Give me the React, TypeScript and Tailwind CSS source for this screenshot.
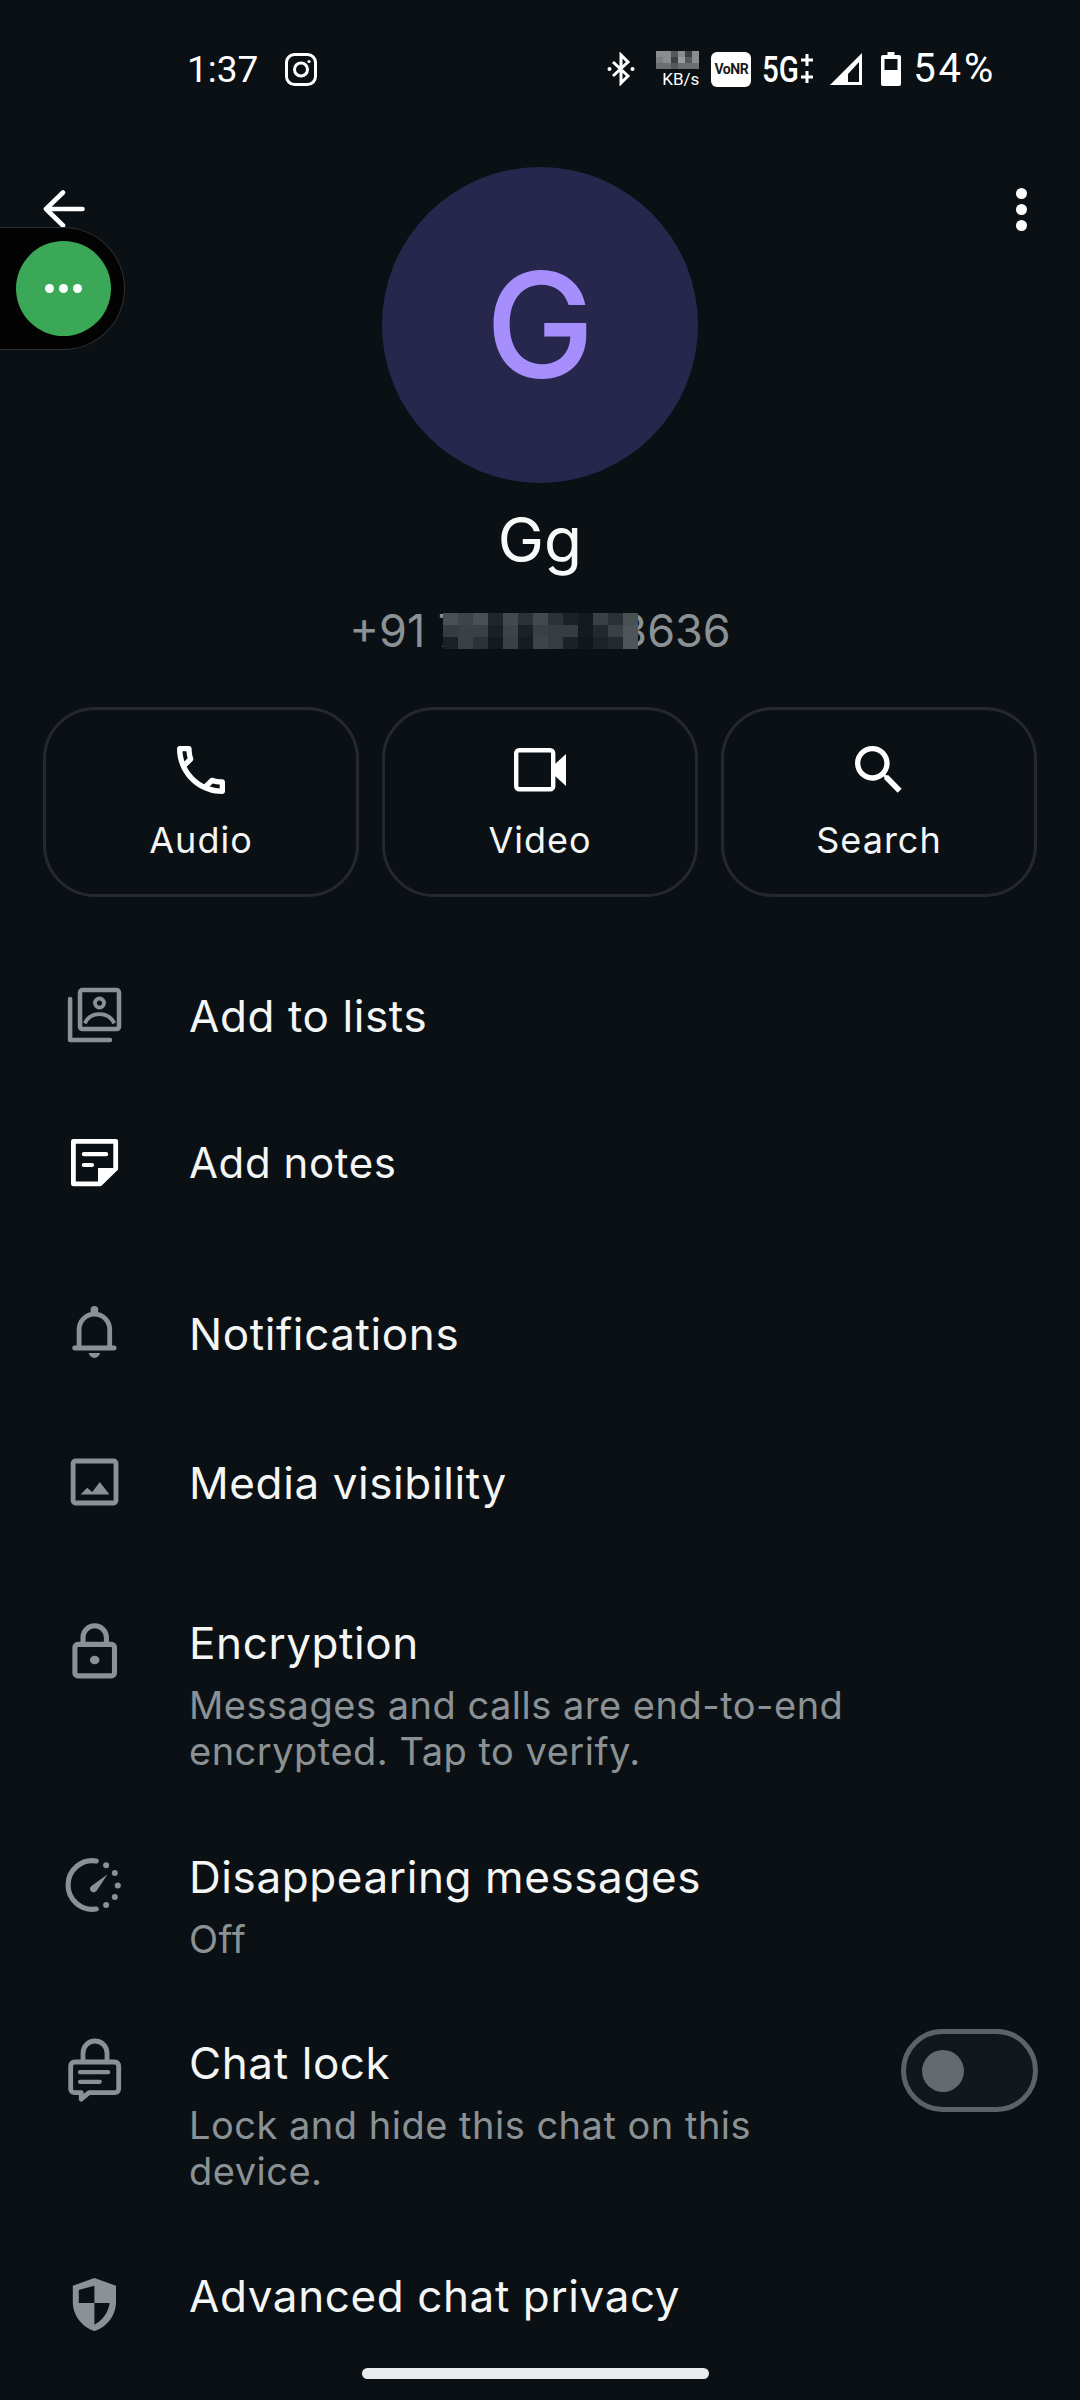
import React from 'react';

const FONT = "font-['Inter',sans-serif]";
const GREY = '#8b9295';

// mosaic cells hiding the middle of the phone number
const MOSAIC = [
  ['#4a5154', '#3e4548', '#4a5154', '#1f272b', '#434a4d', '#2b3337', '#434a4d', '#2b3337', '#1a2226', '#141b1f', '#3a4144', '#2b3135', '#4a5154'],
  ['#363d40', '#3a4144', '#3a4144', '#192125', '#3e4548', '#1a2226', '#3a4144', '#363d40', '#363d40', '#141b1f', '#232a2e', '#3a4144', '#4f5659'],
  ['#1a2226', '#3a4144', '#2c3336', '#141b1f', '#3a4144', '#161d21', '#3e4548', '#363d40', '#1a2226', '#11181c', '#1d2428', '#232a2e', '#4f5659'],
];
const SPEED = [
  ['#8a8d8f', '#8a8d8f', '#55595b', '#8a8d8f', '#3a3f42', '#8a8d8f'],
  ['#7c7f81', '#8a8d8f', '#3c4043', '#9a9c9e', '#55595b', '#8a8d8f'],
  ['#6b6e70', '#6b6e70', '#55595b', '#6b6e70', '#6b6e70', '#6b6e70'],
];

const Icon = ({children}: {children: React.ReactNode}) => (
  <svg viewBox="0 0 24 24" className="w-[72px] h-[72px] shrink-0" fill="none">{children}</svg>
);

const ListsIcon = () => (
  <Icon>
    <rect x="7" y="3.7" width="13" height="13" rx="0.8" stroke={GREY} strokeWidth="1.5"/>
    <path d="M3.7 6.7V20.3H17" stroke={GREY} strokeWidth="1.5" strokeLinecap="round" strokeLinejoin="round"/>
    <circle cx="13.5" cy="8" r="1.5" stroke={GREY} strokeWidth="1.3"/>
    <path d="M8.6 14.8c1-2.2 3-3.1 4.9-3.1s3.9.9 4.9 3.1" stroke={GREY} strokeWidth="1.3"/>
  </Icon>
);
const NotesIcon = () => (
  <Icon>
    <path d="M4.8 5.1h14.1v9.1l-5.2 5.1H4.8z" stroke="#fff" strokeWidth="1.6" strokeLinejoin="round"/>
    <path d="M13 19.5V14h6.2z" fill="#fff"/>
    <path d="M8.3 9.4H15.7M8.3 13H11" stroke="#fff" strokeWidth="1.4" strokeLinecap="round"/>
  </Icon>
);
const BellIcon = () => (
  <Icon>
    <circle cx="11.8" cy="4.3" r="1.3" fill={GREY}/>
    <path d="M6.7 17v-6.2a5.1 5.1 0 0 1 10.2 0V17" stroke={GREY} strokeWidth="1.6"/>
    <path d="M5.2 17h13.2" stroke={GREY} strokeWidth="1.6" strokeLinecap="round"/>
    <path d="M9.9 18.7h3.8c-.2 1-1 1.6-1.9 1.6s-1.7-.6-1.9-1.6z" fill={GREY}/>
  </Icon>
);
const MediaIcon = () => (
  <Icon>
    <rect x="4.7" y="5" width="14.3" height="14" rx="0.8" stroke={GREY} strokeWidth="1.6"/>
    <path d="M7.2 16.2l2.2-2.3 1.7 1.4 2.5-3.3 3.2 4.2z" fill={GREY}/>
  </Icon>
);
const LockIcon = () => (
  <Icon>
    <rect x="5.3" y="9.8" width="13.2" height="10.5" rx="1" stroke={GREY} strokeWidth="1.7"/>
    <path d="M8 9.8V7.5a3.9 3.9 0 0 1 7.8 0v2.3" stroke={GREY} strokeWidth="1.7"/>
    <ellipse cx="11.9" cy="15" rx="1.6" ry="1.4" fill={GREY}/>
  </Icon>
);
const TimerIcon = () => (
  <Icon>
    <path d="M12.4 4A8.1 8.1 0 1 0 12.4 20" stroke={GREY} strokeWidth="1.7" strokeLinecap="round"/>
    <circle cx="15.7" cy="5.4" r="1" fill={GREY}/>
    <circle cx="18.6" cy="8" r="1" fill={GREY}/>
    <circle cx="19.6" cy="12.2" r="1" fill={GREY}/>
    <circle cx="18.6" cy="16" r="1" fill={GREY}/>
    <circle cx="15.7" cy="18.7" r="1" fill={GREY}/>
    <path d="M10.7 12.4l5.5-4-3.7 5.6c-.6.6-1.3.6-1.8.1s-.5-1.2 0-1.7z" fill={GREY}/>
  </Icon>
);
const ChatLockIcon = () => (
  <Icon>
    <path d="M5.2 9h13.4c.8 0 1.3.6 1.3 1.3v7.6c0 .8-.5 1.3-1.3 1.3H10l-2.6 2.2v-2.2H5.2c-.8 0-1.3-.5-1.3-1.3v-7.6C3.9 9.6 4.4 9 5.2 9z" stroke={GREY} strokeWidth="1.6" strokeLinejoin="round"/>
    <path d="M8 9V6a4 4 0 0 1 8 0v3" stroke={GREY} strokeWidth="1.6"/>
    <path d="M7 12.4h9.4M7 15.6h6.6" stroke={GREY} strokeWidth="1.4" strokeLinecap="round"/>
  </Icon>
);
const ShieldIcon = () => (
  <Icon>
    <path d="M11.8 3.3l7.2 2.6v5.4c0 4.4-3 8.3-7.2 9.7-4.2-1.4-7.2-5.3-7.2-9.7V5.9z" fill={GREY}/>
    <path d="M11.8 5.9L6.6 7.3v4.4h5.2zM11.8 11.7v7.2c2.6-1.3 4.6-3.9 5.1-7.2z" fill="#0b1014"/>
  </Icon>
);

const ActionButton = ({label, children}: {label: string; children: React.ReactNode}) => (
  <div className="w-[316px] h-[190px] rounded-[52px] border-[3px] border-[#25292d] flex flex-col items-center">
    <div className="h-[64px] mt-[28px] flex items-center justify-center">{children}</div>
    <div className="mt-[13px] text-[36px] leading-[50px] tracking-[1px] text-[#f4f6f6]">{label}</div>
  </div>
);

const Row = ({icon, title, className, textSize = 'text-[44px]'}: {icon: React.ReactNode; title: string; className: string; textSize?: string}) => (
  <div className={`flex items-center pl-[59px] gap-[58px] ${className}`}>
    {icon}
    <div className={`pt-[2px] leading-[60px] tracking-[0.6px] text-[#f4f6f6] ${textSize}`}>{title}</div>
  </div>
);

const SubRow = ({icon, title, sub, className}: {icon: React.ReactNode; title: string; sub?: React.ReactNode; className: string}) => (
  <div className={`flex items-start pl-[59px] gap-[58px] ${className}`}>
    {icon}
    <div className="-mt-[2px]">
      <div className="text-[44px] leading-[60px] tracking-[0.6px] text-[#f4f6f6]">{title}</div>
      {sub && <div className="mt-[9px] text-[38px] leading-[46px] tracking-[0.5px] text-[#8b9295]">{sub}</div>}
    </div>
  </div>
);

const StatusBar = () => (
  <div className="h-[138px] flex items-center pl-[187px] pr-[84px] text-white font-['Roboto',sans-serif]">
    <span className="text-[37px] leading-none w-[72px]">1:37</span>
    <svg viewBox="0 0 32 33" className="ml-[26px] w-[32px] h-[33px]" fill="none" stroke="#fff">
      <rect x="1.5" y="1.5" width="29" height="30" rx="8" strokeWidth="3"/>
      <circle cx="16" cy="16.5" r="6.5" strokeWidth="3"/>
      <circle cx="24" cy="8.5" r="1.6" fill="#fff" stroke="none"/>
    </svg>
    <div className="ml-auto flex items-center">
      <svg viewBox="0 0 30 34" className="w-[30px] h-[34px]" fill="none" stroke="#fff" strokeWidth="3">
        <path d="M7 10l15 14-7 7V3l7 7L7 24"/>
        <circle cx="3.5" cy="17" r="2" fill="#fff" stroke="none"/>
        <circle cx="26.5" cy="17" r="2" fill="#fff" stroke="none"/>
      </svg>
      <div className="ml-[20px] w-[43px] h-[36px] flex flex-col items-end">
        <div className="grid grid-cols-6 w-[43px]">
          {SPEED.flat().map((c, i) => <div key={i} className="h-[6px]" style={{backgroundColor: c}}/>)}
        </div>
        <span className="mt-[2px] text-[17px] leading-[16px]">KB/s</span>
      </div>
      <div className="ml-[12px] w-[40px] h-[35px] rounded-[6px] bg-white flex items-center justify-center text-[14px] font-bold text-[#1a1a1a] tracking-[-0.5px]">VoNR</div>
      <span className="ml-[11px] w-[34px] text-[37px] leading-none font-medium whitespace-nowrap origin-left scale-x-[0.8]">5G</span>
      <svg viewBox="0 0 16 30" className="ml-[3px] w-[16px] h-[30px]" stroke="#fff" strokeWidth="3">
        <path d="M8 0v12M2 6h12M8 17v12M2 23h12"/>
      </svg>
      <svg viewBox="0 0 32 32" className="ml-[15px] w-[32px] h-[32px]" fill="none">
        <path fillRule="evenodd" d="M32 0v32H0zM29 9L18 21v8h11z" fill="#fff"/>
      </svg>
      <svg viewBox="0 0 20 34" className="ml-[19px] w-[20px] h-[34px]">
        <path fillRule="evenodd" d="M6.5 0h7v3H18a2 2 0 0 1 2 2v27a2 2 0 0 1-2 2H2a2 2 0 0 1-2-2V5a2 2 0 0 1 2-2h4.5zM3.5 7v11h13V7z" fill="#fff"/>
      </svg>
      <span className="ml-[12px] text-[40px] leading-none tracking-[2.8px]">54%</span>
    </div>
  </div>
);

const App = () => {
  return (
    <div className={`${FONT} relative w-[1080px] h-[2400px] overflow-hidden bg-[#0b1014]`}>
      <StatusBar/>

      <div className="flex flex-col items-center">
        <div className="mt-[29px] w-[316px] h-[316px] rounded-full bg-[#27274d] flex items-center justify-center">
          <span className="text-[146px] leading-none font-medium text-[#a68ffc]">G</span>
        </div>
        <div className="mt-[21px] text-[62px] leading-[72px] text-[#f8f9f9]">Gg</div>
        <div className="mt-[27px] h-[56px] flex items-center text-[45px] leading-[56px] text-[#8b9295]">
          <span>+91 7</span>
          <div className="relative -ml-[20px] grid grid-cols-13 w-[195px]">
            {MOSAIC.flat().map((c, i) => <div key={i} className="h-[12px]" style={{backgroundColor: c}}/>)}
          </div>
          <span className="-ml-[19px]">3636</span>
        </div>
      </div>

      <div className="mt-[48px] px-[43px] flex justify-between">
        <ActionButton label="Audio">
          <svg viewBox="0 0 24 24" className="w-[64px] h-[64px]" fill="#fff">
            <path d="M6.54 5c.06.89.21 1.76.45 2.59l-1.2 1.2c-.41-1.2-.67-2.47-.76-3.79h1.51m9.86 12.02c.85.24 1.72.39 2.6.45v1.49c-1.32-.09-2.59-.35-3.8-.75l1.2-1.19M7.5 3H4c-.55 0-1 .45-1 1 0 9.39 7.61 17 17 17 .55 0 1-.45 1-1v-3.49c0-.55-.45-1-1-1-1.24 0-2.45-.2-3.57-.57-.1-.04-.21-.05-.31-.05-.26 0-.51.1-.71.29l-2.2 2.2c-2.83-1.45-5.15-3.76-6.59-6.59l2.2-2.2c.28-.28.36-.67.25-1.02C8.7 6.45 8.5 5.25 8.5 4c0-.55-.45-1-1-1z"/>
          </svg>
        </ActionButton>
        <ActionButton label="Video">
          <svg viewBox="0 0 52 44" className="w-[52px] h-[44px]" fill="none">
            <rect x="2.2" y="2.2" width="37" height="39" rx="3" stroke="#fff" strokeWidth="4.4"/>
            <path d="M41 16l11-10v32L41 28z" fill="#fff"/>
          </svg>
        </ActionButton>
        <ActionButton label="Search">
          <svg viewBox="0 0 24 24" className="w-[64px] h-[64px]" fill="#fff">
            <path d="M15.5 14h-.79l-.28-.27C15.41 12.59 16 11.11 16 9.5 16 5.91 13.09 3 9.5 3S3 5.91 3 9.5 5.91 16 9.5 16c1.61 0 3.09-.59 4.23-1.57l.27.28v.79l5 4.99L20.49 19l-4.99-5zm-6 0C7.01 14 5 11.99 5 9.5S7.01 5 9.5 5 14 7.01 14 9.5 11.99 14 9.5 14z"/>
          </svg>
        </ActionButton>
      </div>

      <Row icon={<ListsIcon/>} title="Add to lists" className="mt-[82px]"/>
      <Row icon={<NotesIcon/>} title="Add notes" className="mt-[75px]" textSize="text-[42px]"/>
      <Row icon={<BellIcon/>} title="Notifications" className="mt-[99px]"/>
      <Row icon={<MediaIcon/>} title="Media visibility" className="mt-[77px]"/>

      <SubRow icon={<LockIcon/>} title="Encryption" className="mt-[97px]" sub={<>Messages and calls are end-to-end<br/>encrypted. Tap to verify.</>}/>
      <SubRow icon={<TimerIcon/>} title="Disappearing messages" className="mt-[75px]" sub="Off"/>

      <div className="mt-[73px] relative">
        <SubRow icon={<ChatLockIcon/>} title="Chat lock" className="" sub={<>Lock and hide this chat on this<br/>device.</>}/>
        <div className="absolute left-[901px] top-[-6px] w-[137px] h-[83px] rounded-full border-[5px] border-[#5c6368] bg-[#12171b] flex items-center pl-[16px]">
          <div className="w-[42px] h-[42px] rounded-full bg-[#646a6f]"/>
        </div>
      </div>

      <SubRow icon={<ShieldIcon/>} title="Advanced chat privacy" className="mt-[74px]"/>

      {/* back arrow + overflow menu sit over the header */}
      <svg viewBox="0 0 42 38" className="absolute left-[43px] top-[190px] w-[42px] h-[38px]" fill="none" stroke="#fff" strokeWidth="4.6" strokeLinecap="round" strokeLinejoin="round">
        <path d="M20 2.5L3 19l17 16.5M3 19h36.5"/>
      </svg>
      <div className="absolute left-[1016px] top-[188px] flex flex-col gap-[5px]">
        <div className="w-[11px] h-[11px] rounded-full bg-white"/>
        <div className="w-[11px] h-[11px] rounded-full bg-white"/>
        <div className="w-[11px] h-[11px] rounded-full bg-white"/>
      </div>

      {/* floating chat head */}
      <div className="absolute left-0 top-[227px] w-[125px] h-[123px] rounded-r-full bg-[#030303] border border-l-0 border-[#2e3032] flex items-center pl-[16px]">
        <div className="w-[95px] h-[95px] rounded-full bg-[#3aa856] flex items-center justify-center gap-[5px]">
          <div className="w-[9px] h-[9px] rounded-full bg-white"/>
          <div className="w-[9px] h-[9px] rounded-full bg-white"/>
          <div className="w-[9px] h-[9px] rounded-full bg-white"/>
        </div>
      </div>

      <div className="absolute left-[362px] top-[2368px] w-[347px] h-[11px] rounded-full bg-[#e9eaec]"/>
    </div>
  );
};

export default App;
